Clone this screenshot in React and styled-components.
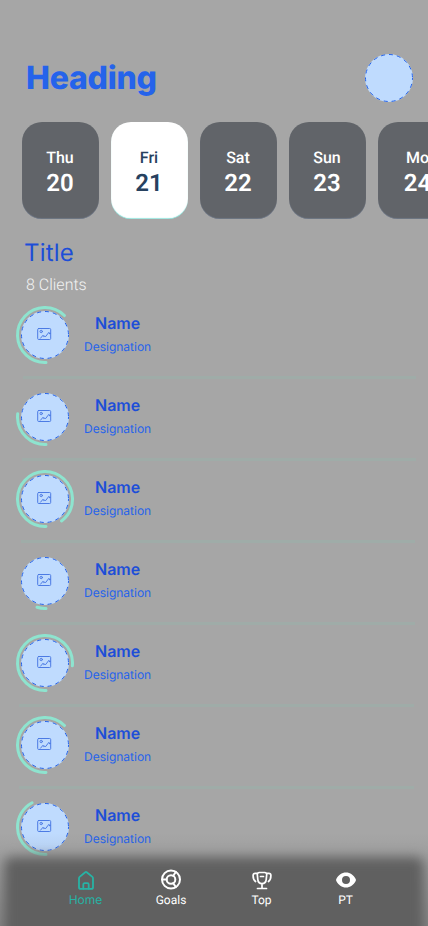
import React from "react";
import styled, { createGlobalStyle } from "styled-components";

const GlobalStyle = createGlobalStyle`
  * { box-sizing: border-box; }
  body { margin: 0; background: #a6a6a6; }
`;

const Screen = styled.main`
  position: relative;
  width: 428px;
  height: 926px;
  overflow: hidden;
  padding-top: 54px;
  background: #a6a6a6;
  font-family: Inter, sans-serif;
  text-rendering: geometricPrecision;
`;

const Header = styled.header`
  display: flex;
  justify-content: space-between;
  align-items: center;
  height: 48px;
  padding: 0 15px 0 26px;
`;

const Heading = styled.h1`
  margin: 0;
  font-size: 32px;
  line-height: 40px;
  font-weight: 800;
  letter-spacing: -0.25px;
  color: #2563eb;
`;

const Days = styled.div`
  display: flex;
  gap: 12px;
  margin-top: 20px;
  padding-left: 22px;
`;

const DayCard = styled.button`
  flex: 0 0 77px;
  height: 97px;
  padding: 2px 1px 0 0;
  border: 0;
  border-radius: 20px;
  display: flex;
  flex-direction: column;
  align-items: center;
  justify-content: center;
  font-family: Roboto, sans-serif;
  font-weight: 500;
  color: ${(p) => (p.$active ? "#27415f" : "#fff")};
  background: ${(p) => (p.$active ? "#fff" : "#616469")};
  box-shadow: inset 0 -1px 1px -0.5px ${(p) => (p.$active ? "#4fd1c5" : "#7a879c")};
  text-rendering: geometricPrecision;

  &:last-child { flex-basis: 80px; }
`;

const Weekday = styled.span`
  font-size: 16px;
  line-height: 22px;
`;

const DayNumber = styled.span`
  font-size: 24px;
  line-height: 28px;
  font-weight: 600;
`;

const Title = styled.h2`
  margin: 19px 0 0 24px;
  font-size: 24px;
  line-height: 30px;
  font-weight: 400;
  letter-spacing: 0.2px;
  color: #1d4ed8;
`;

const Count = styled.p`
  margin: 7px 0 0 26px;
  font-family: Roboto, sans-serif;
  font-size: 16px;
  line-height: 20px;
  font-weight: 300;
  color: #f3f3f3;
`;

const List = styled.ul`
  list-style: none;
  margin: 10px 0 0;
  padding: 0 12px 0 15px;
`;

const Client = styled.li`
  display: flex;
  flex-wrap: wrap;
  align-content: flex-start;
  height: 82px;
`;

const Person = styled.div`
  display: flex;
  flex-direction: column;
  align-items: center;
  margin-left: 9px;
  padding-top: 8px;
`;

const Name = styled.strong`
  font-size: 16px;
  line-height: 20px;
  font-weight: 600;
  color: #1d4ed8;
`;

const Designation = styled.span`
  margin-top: 6px;
  font-size: 12px;
  line-height: 16px;
  color: #2563eb;
`;

const Divider = styled.div`
  width: ${(p) => 393 + p.$shift * 0.5}px;
  height: 3px;
  margin: 11px 0 0 ${(p) => 8 - p.$shift}px;
  background: #9faca8;
`;

const Nav = styled.nav`
  position: absolute;
  left: 0;
  right: 0;
  bottom: 0;
  height: 71px;
  display: grid;
  grid-template-columns: 85px 86px 95px 73px;
  justify-content: start;
  padding: 13px 0 0 43px;
  isolation: isolate;

  &::before {
    content: "";
    position: absolute;
    z-index: -1;
    inset: 2px 4px -30px;
    border-radius: 8px;
    background: #606060;
    filter: blur(6px);
  }

  &::after {
    content: "";
    position: absolute;
    z-index: -2;
    inset: -22px 0 0;
    background: linear-gradient(transparent, rgba(96, 96, 96, 0.45));
  }
`;

const Tab = styled.a`
  display: flex;
  flex-direction: column;
  align-items: center;
  font-family: ${(p) => (p.$active ? "Inter" : "Roboto")}, sans-serif;
  font-size: 12px;
  line-height: 16px;
  color: ${(p) => (p.$active ? "#27b3a5" : "#fff")};

  svg { display: block; }
`;

function ProfileCircle() {
  return (
    <svg width="48" height="48" viewBox="0 0 48 48">
      <circle cx="24" cy="24" r="24" fill="#bfdbfe" />
      <circle cx="24" cy="24" r="23.5" fill="none" stroke="#2563eb" strokeDasharray="4 4" strokeDashoffset="2" />
    </svg>
  );
}

function ProgressAvatar({ sweep }) {
  return (
    <svg width="60" height="60" viewBox="0 0 60 60">
      <circle cx="30" cy="30" r="24" fill="#bfdbfe" />
      <circle cx="30" cy="30" r="23.5" fill="none" stroke="#2563eb" strokeDasharray="4 4" strokeDashoffset="2" />
      <circle
        cx="30" cy="30" r="27.5" fill="none" stroke="#8ee4cf" strokeWidth="3"
        strokeLinecap="round" pathLength="360" strokeDasharray={`${sweep + 2} 360`}
        transform="rotate(88 30 30)"
      />
      <g fill="none" stroke="#4c7be4" strokeLinecap="round" strokeLinejoin="round">
        <rect x="22.7" y="23.5" width="13" height="11" rx="1" />
        <circle cx="26.2" cy="26.5" r="1.2" />
        <path d="M25.5 33.2l2.6-3 .8 1.6 1-.9.6.8 3.4-4.4.9 1.7.8-.7" />
      </g>
    </svg>
  );
}

const line = { fill: "none", stroke: "currentColor", strokeWidth: 2, strokeLinejoin: "round", strokeLinecap: "round" };

function HomeIcon() {
  return (
    <svg width="24" height="24" viewBox="0 0 24 24" {...line} strokeWidth="1.8">
      <path d="M5 10.2Q5 9.4 5.6 8.9L11.3 4.2Q12 3.6 12.7 4.2L18.4 8.9Q19 9.4 19 10.2V19.2a1.7 1.7 0 0 1-1.7 1.7H6.7A1.7 1.7 0 0 1 5 19.2z" />
      <path d="M9.3 20.7v-4.3c0-.7.5-1.2 1.2-1.2h3c.7 0 1.2.5 1.2 1.2v4.3" />
    </svg>
  );
}

function GoalsIcon() {
  return (
    <svg width="24" height="24" viewBox="0 0 24 24" {...line}>
      <circle cx="12" cy="11.5" r="9" />
      <circle cx="12" cy="11.5" r="4.3" />
      <path d="M3.5 11.5h4M14.3 7.8l2.6-4M14.3 15.2l2.6 4" />
    </svg>
  );
}

function TrophyIcon() {
  return (
    <svg width="24" height="24" viewBox="0 0 24 24" {...line} strokeWidth="1.7">
      <path d="M9.2 4.5h5.6c1.2 0 2 .9 1.9 2l-.5 5.2c-.2 2.2-1.8 3.9-4.2 3.9s-4-1.7-4.2-3.9l-.5-5.2c-.1-1.1.7-2 1.9-2zM12 15.8v4.4M7.5 20.5h9M10.5 8.5h3" />
      <path d="M6.7 5.3H5.2c-1.3 0-2.1.9-2.1 2.2 0 2.3.6 4.6 2.4 6M17.3 5.3h1.5c1.3 0 2.1.9 2.1 2.2 0 2.3-.6 4.6-2.4 6" />
    </svg>
  );
}

function EyeIcon() {
  return (
    <svg width="24" height="24" viewBox="0 0 24 24" fill="currentColor">
      <path fillRule="evenodd" d="M2.3 11C4.5 6.9 7.7 4.5 12 4.5s7.5 2.4 9.7 6.5q.5 1 0 2c-2.2 4.1-5.4 6.5-9.7 6.5S4.5 17.1 2.3 13q-.5-1 0-2zM12 8a4 4 0 1 0 0 8 4 4 0 0 0 0-8z" />
    </svg>
  );
}

const days = [["Thu", 20], ["Fri", 21], ["Sat", 22], ["Sun", 23], ["Mo", 24]];
const progress = [225, 97, 323, 17, 276, 225, 152];

export default function App() {
  return (
    <>
      <GlobalStyle />
      <Screen>
        <Header>
          <Heading>Heading</Heading>
          <ProfileCircle />
        </Header>
        <Days>
          {days.map(([day, number]) => (
            <DayCard key={number} $active={number === 21}>
              <Weekday>{day}</Weekday>
              <DayNumber>{number}</DayNumber>
            </DayCard>
          ))}
        </Days>
        <Title>Title</Title>
        <Count>8 Clients</Count>
        <List>
          {progress.map((sweep, i) => (
            <Client key={i}>
              <ProgressAvatar sweep={sweep} />
              <Person>
                <Name>Name</Name>
                <Designation>Designation</Designation>
              </Person>
              <Divider $shift={Math.min(i, 4)} />
            </Client>
          ))}
        </List>
        <Nav>
          <Tab $active><HomeIcon />Home</Tab>
          <Tab><GoalsIcon />Goals</Tab>
          <Tab><TrophyIcon />Top</Tab>
          <Tab><EyeIcon />PT</Tab>
        </Nav>
      </Screen>
    </>
  );
}
